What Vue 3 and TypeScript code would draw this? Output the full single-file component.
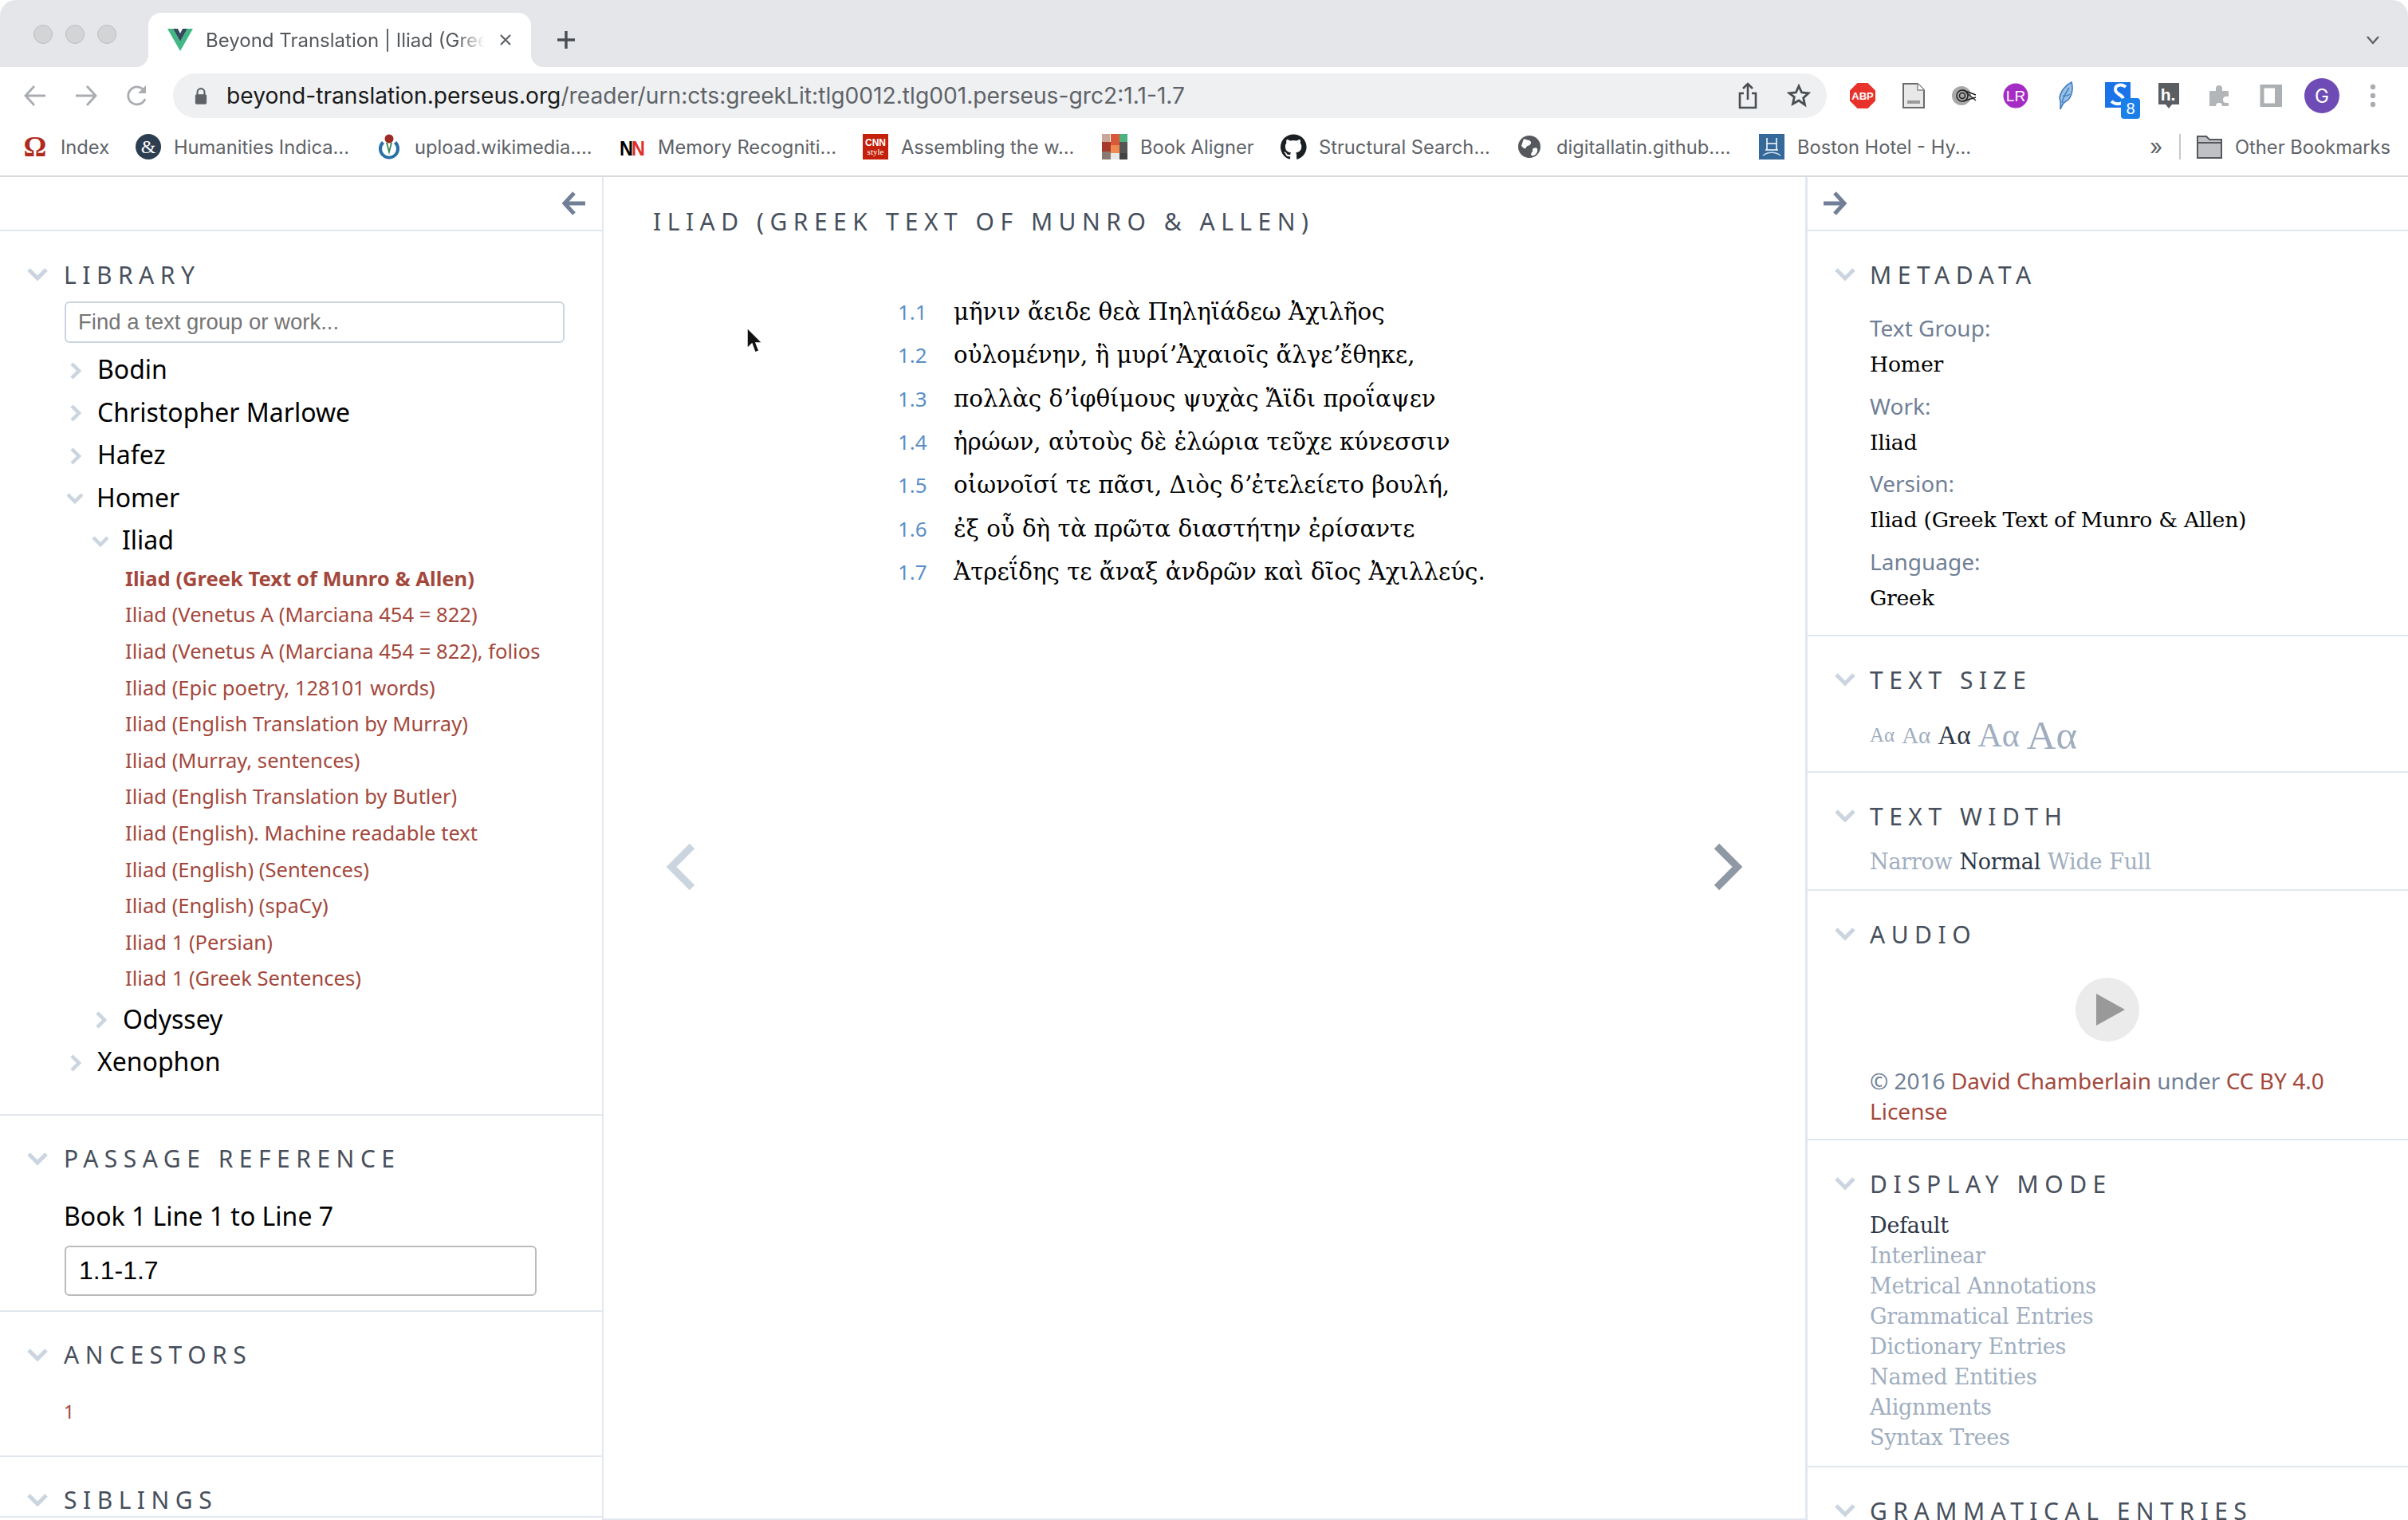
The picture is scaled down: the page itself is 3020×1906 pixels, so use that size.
<template>
  <div class="page">
    <svg class="sprite" aria-hidden="true">
      <symbol id="chev-down" viewBox="0 0 28 18"><path d="M3 3l11 11L25 3" fill="none" stroke="#cbd5e0" stroke-width="5" /></symbol>
      <symbol id="tree-down" viewBox="0 0 22 14"><path d="M2 2l9 9 9-9" fill="none" stroke="#cbd5e0" stroke-width="4.500" /></symbol>
      <symbol id="tree-right" viewBox="0 0 14 22"><path d="M2 2l9 9-9 9" fill="none" stroke="#cbd5e0" stroke-width="4.500" /></symbol>
    </svg>

    <header class="browser">
      <div class="tabstrip">
        <div class="lights"><i /><i /><i /></div>
        <div class="tab">
          <svg class="favicon" viewBox="0 0 32 28">
            <path d="M0 0h7l9 16L25 0h7L16 28z" fill="#41b883" />
            <path d="M7 0h6l3 6 3-6h6l-9 16z" fill="#34495e" />
          </svg>
          <span class="tab-title">Beyond Translation | Iliad (Gree</span>
          <svg class="tab-close" viewBox="0 0 16 16"><path d="M2 2l12 12M14 2L2 14" stroke="#5f6368" stroke-width="2.2" /></svg>
        </div>
        <svg class="tab-plus" viewBox="0 0 24 24"><path d="M12 1v22M1 12h22" stroke="#4a4d51" stroke-width="3.4" /></svg>
        <svg class="tab-caret" viewBox="0 0 18 12"><path d="M2 2l7 8 7-8" fill="none" stroke="#5f6368" stroke-width="2.4" /></svg>
      </div>

      <div class="toolbar">
        <div class="tool">
          <svg width="30" height="28" viewBox="0 0 30 28"><path d="M28 14H3M14 2L3 14l11 12" fill="none" stroke="#a9adb2" stroke-width="2.8" /></svg>
        </div>
        <div class="tool">
          <svg width="30" height="28" viewBox="0 0 30 28"><path d="M2 14h25M16 2l11 12-11 12" fill="none" stroke="#a9adb2" stroke-width="2.8" /></svg>
        </div>
        <div class="tool">
          <svg width="30" height="30" viewBox="0 0 30 30"><path d="M25 19a11 11 0 1 1-1-10" fill="none" stroke="#a9adb2" stroke-width="2.8" /><path d="M26 2v10H16z" fill="#a9adb2" /></svg>
        </div>
        <div class="omnibox">
          <svg class="lock" viewBox="0 0 18 24">
            <path d="M4 11V7a5 5 0 0 1 10 0v4" fill="none" stroke="#5f6368" stroke-width="2.4" />
            <rect x="1" y="10" width="16" height="14" rx="2" fill="#5f6368" />
          </svg>
          <span class="url"><b>beyond-translation.perseus.org</b>/reader/urn:cts:greekLit:tlg0012.tlg001.perseus-grc2:1.1-1.7</span>
          <div class="tool">
            <svg width="24" height="34" viewBox="0 0 24 34"><path d="M7 14H2v18h20V14h-5M12 22V2M6 8l6-6 6 6" fill="none" stroke="#4a4d51" stroke-width="2.6" /></svg>
          </div>
          <div class="tool">
            <svg width="30" height="30" viewBox="0 0 30 30"><path d="M15 3l3.6 8 8.4.9-6.3 5.8 1.8 8.6L15 21l-7.5 4.3 1.8-8.6L3 11.900l8.400-.9z" fill="none" stroke="#4a4d51" stroke-width="2.8" /></svg>
          </div>
        </div>
        <div class="tool ext-first">
          <svg width="32" height="32" viewBox="0 0 32 32">
            <path d="M9.500 0h13L32 9.500v13L22.500 32h-13L0 22.500v-13z" fill="#e8332d" />
            <text x="16" y="21" class="ico-text" font-size="13" font-weight="700" fill="#fff" text-anchor="middle">ABP</text>
          </svg>
        </div>
        <div class="tool">
          <svg width="28" height="32" viewBox="0 0 28 32">
            <path d="M1 1h18l8 8v22H1z" fill="#e8e8e8" stroke="#6a6a6a" stroke-width="2" />
            <path d="M19 1v8h8" fill="#fff" stroke="#8a8a8a" stroke-width="1.500" />
            <rect x="6" y="22" width="16" height="4" fill="#9a9a9a" />
          </svg>
        </div>
        <div class="tool">
          <svg width="32" height="26" viewBox="0 0 32 26">
            <circle cx="12" cy="13" r="12" fill="#a8a8a8" />
            <g fill="none" stroke="#222" stroke-width="1.500"><circle cx="13" cy="13" r="7" /><circle cx="13" cy="13" r="3.500" /><path d="M14 6l16 6M14 20l16-5M18 9l12 10" /></g>
          </svg>
        </div>
        <div class="tool">
          <svg width="32" height="32" viewBox="0 0 32 32">
            <circle cx="16" cy="16" r="15.500" fill="#a42bc4" />
            <text x="16" y="23" class="ico-text" font-size="19" fill="#fff" text-anchor="middle">LR</text>
          </svg>
        </div>
        <div class="tool">
          <svg width="22" height="36" viewBox="0 0 22 36">
            <path d="M17 1C9 5 3 13 2 21c2 4 1 8 1 14 2-5 3-8 7-10 6-3 10-13 7-24z" fill="#9cc0e6" stroke="#3f7fc2" stroke-width="1.600" />
            <path d="M14 8C10 14 7 19 5 27M6 18c3 1 6 0 9-2" fill="none" stroke="#3f7fc2" stroke-width="1.400" />
          </svg>
        </div>
        <div class="tool">
          <svg class="ext-s" width="48" height="46" viewBox="0 0 48 46">
            <rect x="0" y="0" width="32" height="32" fill="#1a73e8" />
            <path d="M26 6c-5-4-13-3-13 3 0 7 10 6 10 13 0 6-9 7-15 2" fill="none" stroke="#fff" stroke-width="4" />
            <rect x="20" y="20" width="24" height="26" rx="4" fill="#1a7fe8" />
            <text x="32" y="40" class="ico-text" font-size="20" fill="#fff" text-anchor="middle">8</text>
          </svg>
        </div>
        <div class="tool">
          <svg width="28" height="32" viewBox="0 0 28 32">
            <path d="M1 0h26v27H18l-4 5-4-5H1z" fill="#5a5e62" />
            <text x="13" y="22" class="ico-text" font-size="21" font-weight="700" fill="#fff" text-anchor="middle">h.</text>
          </svg>
        </div>
        <div class="tool">
          <svg width="30" height="30" viewBox="0 0 30 30">
            <path d="M2 9h8V6a4 4 0 0 1 8 0v3h8v7h-3a4 4 0 0 0 0 8h3v4h-8a4 4 0 0 0-8 0H2z" fill="#b3b6b8" />
          </svg>
        </div>
        <div class="tool">
          <svg width="28" height="28" viewBox="0 0 28 28"><rect x="3" y="2" width="24" height="24" fill="none" stroke="#adb0b2" stroke-width="5" /><rect x="19" y="2" width="8" height="24" fill="#adb0b2" /></svg>
        </div>
        <div class="tool">
          <div class="avatar">G</div>
        </div>
        <div class="tool">
          <svg width="8" height="32" viewBox="0 0 8 32"><circle cx="4" cy="5" r="3.200" fill="#a9adb2" /><circle cx="4" cy="16" r="3.200" fill="#a9adb2" /><circle cx="4" cy="27" r="3.200" fill="#a9adb2" /></svg>
        </div>
      </div>

      <div class="bookmarks">
        <div v-for="b in bookmarks" :key="b.label" class="bookmark">
          <svg class="bm-icon" viewBox="0 0 32 32" v-html="b.icon" />
          <span class="bm-text" :style="{ width: b.width + 'px' }">{{ b.label }}</span>
        </div>
        <span class="bm-more">»</span>
        <i class="bm-sep" />
        <svg class="bm-icon" viewBox="0 0 32 32">
          <path d="M1 30V3h11l4 4h15v23z" fill="#bfc1c4" stroke="#55585c" stroke-width="2" />
          <path d="M1 11h30" stroke="#55585c" stroke-width="2" />
        </svg>
        <span class="bm-other">Other Bookmarks</span>
      </div>
    </header>

    <main class="reader">
      <aside class="sidebar sidebar-left">
        <div class="side-head side-head-left">
          <svg width="32" height="32" viewBox="0 0 32 32"><path d="M30 16H5M16 3L4 16l12 13" fill="none" stroke="#718096" stroke-width="5" /></svg>
        </div>

        <section class="section section-library">
          <h2 class="section-title"><svg class="title-chev"><use href="#chev-down" /></svg>Library</h2>
          <div class="fake-input search-input">Find a text group or work...</div>
          <ul class="tree">
            <li v-for="name in ['Bodin', 'Christopher Marlowe', 'Hafez']" :key="name" class="tree-row">
              <svg class="tree-chev-r"><use href="#tree-right" /></svg>{{ name }}
            </li>
            <li class="tree-row"><svg class="tree-chev-d"><use href="#tree-down" /></svg>Homer</li>
            <li class="tree-row nested"><svg class="tree-chev-d"><use href="#tree-down" /></svg>Iliad</li>
            <li v-for="(v, i) in versions" :key="v" class="version" :class="{ current: i === 0 }">{{ v }}</li>
            <li class="tree-row nested"><svg class="tree-chev-r"><use href="#tree-right" /></svg>Odyssey</li>
            <li class="tree-row"><svg class="tree-chev-r"><use href="#tree-right" /></svg>Xenophon</li>
          </ul>
        </section>

        <section class="section section-passage">
          <h2 class="section-title"><svg class="title-chev"><use href="#chev-down" /></svg>Passage Reference</h2>
          <div class="passage-label">Book 1 Line 1 to Line 7</div>
          <div class="fake-input passage-input">1.1-1.7</div>
        </section>

        <section class="section section-ancestors">
          <h2 class="section-title"><svg class="title-chev"><use href="#chev-down" /></svg>Ancestors</h2>
          <div class="ancestor">1</div>
        </section>

        <section class="section">
          <h2 class="section-title"><svg class="title-chev"><use href="#chev-down" /></svg>Siblings</h2>
        </section>
      </aside>

      <div class="center">
        <h1 class="work-title">Iliad (Greek Text of Munro &amp; Allen)</h1>
        <div class="center-body">
          <svg class="pager" width="42" height="60" viewBox="0 0 42 60"><path d="M36 4L10 30l26 26" fill="none" stroke="#cbd5e0" stroke-width="9" /></svg>
          <ol class="lines">
            <li v-for="l in lines" :key="l.ref" class="line">
              <span class="line-ref">{{ l.ref }}</span>
              <span class="line-text">{{ l.text }}</span>
            </li>
          </ol>
          <svg class="pager" width="42" height="60" viewBox="0 0 42 60"><path d="M6 4l26 26L6 56" fill="none" stroke="#8f99a6" stroke-width="9" /></svg>
        </div>
        <svg class="cursor" width="24" height="36" viewBox="0 0 24 36">
          <path d="M2 1v26l6-6 4 11 5-2-4-10h8z" fill="#111" stroke="#fff" stroke-width="1.500" />
        </svg>
      </div>

      <aside class="sidebar sidebar-right">
        <div class="side-head">
          <svg width="32" height="32" viewBox="0 0 32 32"><path d="M2 16h25M16 3l12 13-12 13" fill="none" stroke="#718096" stroke-width="5" /></svg>
        </div>

        <section class="section section-meta">
          <h2 class="section-title"><svg class="title-chev"><use href="#chev-down" /></svg>Metadata</h2>
          <dl class="meta">
            <template v-for="m in metadata" :key="m.label">
              <dt>{{ m.label }}:</dt>
              <dd>{{ m.value }}</dd>
            </template>
          </dl>
        </section>

        <section class="section section-size">
          <h2 class="section-title"><svg class="title-chev"><use href="#chev-down" /></svg>Text Size</h2>
          <div class="sizes">
            <span v-for="(s, i) in textSizes" :key="s" :class="{ active: i === 2 }" :style="{ fontSize: s + 'px' }">Aα</span>
          </div>
        </section>

        <section class="section section-width">
          <h2 class="section-title"><svg class="title-chev"><use href="#chev-down" /></svg>Text Width</h2>
          <div class="widths">
            <span>Narrow</span>
            <span class="active">Normal</span>
            <span>Wide</span>
            <span>Full</span>
          </div>
        </section>

        <section class="section section-audio">
          <h2 class="section-title"><svg class="title-chev"><use href="#chev-down" /></svg>Audio</h2>
          <div class="play">
            <svg width="36" height="40" viewBox="0 0 36 40"><path d="M0 0l36 20L0 40z" fill="#999" /></svg>
          </div>
          <p class="credit">© 2016 <a>David Chamberlain</a> under <a>CC BY 4.0 License</a></p>
        </section>

        <section class="section section-display">
          <h2 class="section-title"><svg class="title-chev"><use href="#chev-down" /></svg>Display Mode</h2>
          <ul class="modes">
            <li v-for="(m, i) in modes" :key="m" :class="{ active: i === 0 }">{{ m }}</li>
          </ul>
        </section>

        <section class="section">
          <h2 class="section-title"><svg class="title-chev"><use href="#chev-down" /></svg>Grammatical Entries</h2>
        </section>
      </aside>
    </main>
  </div>
</template>

<script setup lang="ts">
interface IBookmark {
  label: string;
  width: number;
  icon: string;
}

const bookmarks: IBookmark[] = [
  {
    label: 'Index',
    width: 94,
    icon: '<text x="16" y="28" font-family="Liberation Serif" font-size="36" font-weight="700" fill="#b02a20" text-anchor="middle">Ω</text>',
  },
  {
    label: 'Humanities Indica...',
    width: 254,
    icon: '<circle cx="16" cy="16" r="16" fill="#2c3e50"/><text x="16" y="24" font-family="Liberation Serif" font-size="24" fill="#fff" text-anchor="middle">&amp;</text>',
  },
  {
    label: 'upload.wikimedia....',
    width: 257,
    icon: '<path d="M7 9a13 13 0 1 0 18 0l-3 3a9 9 0 1 1-12 0z" fill="#2a6fa8"/><circle cx="16" cy="6" r="5.500" fill="#9c2a25"/><path d="M12 11l4 15 4-15-2 0-2 8-2-8z" fill="#3a8a5c"/>',
  },
  {
    label: 'Memory Recogniti...',
    width: 257,
    icon: '<text x="0" y="27" font-family="Liberation Sans" font-size="25" font-weight="700" fill="#000" textLength="17" lengthAdjust="spacingAndGlyphs">N</text><text x="15" y="27" font-family="Liberation Sans" font-size="25" font-weight="700" fill="#e0302a" textLength="17" lengthAdjust="spacingAndGlyphs">N</text>',
  },
  {
    label: 'Assembling the w...',
    width: 252,
    icon: '<rect width="32" height="32" fill="#c4200c"/><text x="16" y="15" font-family="Liberation Sans" font-size="12" font-weight="700" fill="#fff" text-anchor="middle">CNN</text><text x="16" y="26" font-family="Liberation Serif" font-size="11" fill="#fff" text-anchor="middle">style</text>',
  },
  {
    label: 'Book Aligner',
    width: 176,
    icon: '<rect width="10" height="10" fill="#c9a89a"/><rect x="11" width="11" height="14" fill="#d9583a"/><rect x="22" width="10" height="10" fill="#4fb080"/><rect y="10" width="11" height="12" fill="#a8382a"/><rect x="11" y="14" width="11" height="10" fill="#ef8a50"/><rect x="22" y="10" width="10" height="14" fill="#555"/><rect y="22" width="11" height="10" fill="#8a7a70"/><rect x="11" y="24" width="11" height="8" fill="#e8e8e8"/><rect x="22" y="24" width="10" height="8" fill="#444"/>',
  },
  {
    label: 'Structural Search...',
    width: 250,
    icon: '<path fill="#1b1f23" d="M16 .4A16 16 0 0 0 11 31.600c.8.100 1.100-.3 1.100-.8v-2.800c-4.500 1-5.400-2.100-5.400-2.100-.7-1.800-1.800-2.300-1.800-2.300-1.400-1 .1-1 .1-1 1.600.1 2.500 1.700 2.500 1.700 1.400 2.500 3.800 1.800 4.700 1.400.1-1.100.6-1.800 1-2.200-3.600-.4-7.300-1.800-7.300-7.900 0-1.800.6-3.200 1.600-4.300-.2-.4-.7-2 .2-4.300 0 0 1.300-.4 4.400 1.600a15 15 0 0 1 8 0c3-2 4.400-1.600 4.400-1.600.9 2.300.3 3.900.2 4.300 1 1.100 1.600 2.500 1.600 4.300 0 6.100-3.700 7.500-7.300 7.900.6.500 1.100 1.500 1.100 3v4.400c0 .4.300.9 1.100.8A16 16 0 0 0 16 .4z"/>',
  },
  {
    label: 'digitallatin.github....',
    width: 254,
    icon: '<circle cx="14" cy="16" r="14" fill="#55585c"/><path d="M7 6c4 2 9 1 9 5s-5 3-6 6-4 0-6-2zM19 18c4-2 6 0 5 4s-5 6-7 5 0-4 1-5-1-3 1-4z" fill="#fff"/>',
  },
  {
    label: 'Boston Hotel - Hy...',
    width: 434,
    icon: '<rect width="32" height="32" fill="#34699a"/><path d="M10 5v15M22 5v15M10 12h12M8 20h16" stroke="#fff" stroke-width="1.500" fill="none"/><path d="M5 27c6-5 16-5 22 0" stroke="#cfe0ee" stroke-width="1.500" fill="none"/>',
  },
];

const versions: string[] = [
  'Iliad (Greek Text of Munro & Allen)',
  'Iliad (Venetus A (Marciana 454 = 822)',
  'Iliad (Venetus A (Marciana 454 = 822), folios',
  'Iliad (Epic poetry, 128101 words)',
  'Iliad (English Translation by Murray)',
  'Iliad (Murray, sentences)',
  'Iliad (English Translation by Butler)',
  'Iliad (English). Machine readable text',
  'Iliad (English) (Sentences)',
  'Iliad (English) (spaCy)',
  'Iliad 1 (Persian)',
  'Iliad 1 (Greek Sentences)',
];

const lines = [
  { ref: '1.1', text: 'μῆνιν ἄειδε θεὰ Πηληϊάδεω Ἀχιλῆος' },
  { ref: '1.2', text: 'οὐλομένην, ἣ μυρίʼἈχαιοῖς ἄλγεʼἔθηκε,' },
  { ref: '1.3', text: 'πολλὰς δʼἰφθίμους ψυχὰς Ἄϊδι προΐαψεν' },
  { ref: '1.4', text: 'ἡρώων, αὐτοὺς δὲ ἑλώρια τεῦχε κύνεσσιν' },
  { ref: '1.5', text: 'οἰωνοῖσί τε πᾶσι, Διὸς δʼἐτελείετο βουλή,' },
  { ref: '1.6', text: 'ἐξ οὗ δὴ τὰ πρῶτα διαστήτην ἐρίσαντε' },
  { ref: '1.7', text: 'Ἀτρεΐδης τε ἄναξ ἀνδρῶν καὶ δῖος Ἀχιλλεύς.' },
];

const metadata = [
  { label: 'Text Group', value: 'Homer' },
  { label: 'Work', value: 'Iliad' },
  { label: 'Version', value: 'Iliad (Greek Text of Munro & Allen)' },
  { label: 'Language', value: 'Greek' },
];

const textSizes = [25, 29, 33, 42, 51];

const modes: string[] = [
  'Default',
  'Interlinear',
  'Metrical Annotations',
  'Grammatical Entries',
  'Dictionary Entries',
  'Named Entities',
  'Alignments',
  'Syntax Trees',
];
</script>

<style>
html,
body {
  margin: 0;
  background: #fff;
  overflow: hidden;
}
</style>

<style scoped>
.page {
  width: 3020px;
  height: 1906px;
  overflow: hidden;
  display: flex;
  flex-direction: column;
  position: relative;
  font-family: "Noto Sans", sans-serif;
  color: #000;
  background: #fff;
}

.sprite {
  position: absolute;
  width: 0;
  height: 0;
}

.ico-text {
  font-family: "Liberation Sans", sans-serif;
}

/* browser chrome */
.browser {
  font-family: Inter, sans-serif;
  flex: none;
}

.tabstrip {
  height: 84px;
  background: #e4e6e9;
  border-radius: 20px 20px 0 0;
  display: flex;
  align-items: flex-end;
  position: relative;
}

.lights {
  display: flex;
  gap: 16px;
  margin: 0 40px 29px 42px;
}

.lights i {
  width: 24px;
  height: 24px;
  border-radius: 50%;
  background: #d3d4d6;
  border: 1px solid #bcbdbf;
  box-sizing: border-box;
}

.tab {
  width: 480px;
  height: 68px;
  background: #fff;
  border-radius: 16px 16px 0 0;
  display: flex;
  align-items: center;
  padding: 0 24px;
  box-sizing: border-box;
  position: relative;
}

.tab::before,
.tab::after {
  content: "";
  position: absolute;
  bottom: 0;
  width: 16px;
  height: 16px;
}

.tab::before {
  left: -16px;
  background: radial-gradient(circle at 0 0, transparent 16px, #fff 16.5px);
}

.tab::after {
  right: -16px;
  background: radial-gradient(circle at 100% 0, transparent 16px, #fff 16.5px);
}

.favicon {
  width: 32px;
  height: 28px;
  flex: none;
  margin-right: 16px;
}

.tab-title {
  width: 350px;
  flex: none;
  font-size: 24px;
  color: #55585c;
  white-space: nowrap;
  -webkit-mask-image: linear-gradient(90deg, #000 90%, transparent 100%);
  mask-image: linear-gradient(90deg, #000 90%, transparent 100%);
}

.tab-close {
  width: 16px;
  height: 16px;
  flex: none;
  margin-left: 18px;
}

.tab-plus {
  width: 24px;
  height: 24px;
  margin: 0 0 22px 32px;
}

.tab-caret {
  width: 18px;
  height: 12px;
  margin: 0 35px 28px auto;
}

.toolbar {
  height: 76px;
  display: flex;
  align-items: center;
  padding: 0 12px 4px;
  box-sizing: border-box;
}

.tool {
  width: 64px;
  height: 56px;
  flex: none;
  display: flex;
  align-items: center;
  justify-content: center;
  position: relative;
}

.ext-first {
  margin-left: 13px;
}

.ext-s {
  margin: 12px 0 0 16px;
  flex: none;
}

.avatar {
  width: 44px;
  height: 44px;
  border-radius: 50%;
  background: #6f4cb5;
  color: #fff;
  font-size: 24px;
  display: flex;
  align-items: center;
  justify-content: center;
}

.omnibox {
  flex: 1;
  height: 56px;
  margin-left: 13px;
  padding: 0 3px 0 27px;
  background: #eef0f2;
  border-radius: 28px;
  display: flex;
  align-items: center;
}

.lock {
  width: 16px;
  height: 22px;
  margin-right: 24px;
  flex: none;
}

.url {
  flex: 1;
  font-size: 28.200px;
  color: #5f6368;
  white-space: nowrap;
}

.url b {
  font-weight: 400;
  color: #1a1a1a;
}

.bookmarks {
  height: 62px;
  box-sizing: border-box;
  padding: 8px 0 20px 28px;
  border-bottom: 2px solid #dadada;
  display: flex;
  align-items: center;
}

.bookmark {
  display: flex;
  align-items: center;
  flex: none;
}

.bm-icon {
  width: 32px;
  height: 32px;
  flex: none;
  margin-right: 16px;
  overflow: visible;
}

.bm-text {
  flex: none;
  font-size: 23.700px;
  color: #5f6368;
  white-space: nowrap;
}

.bm-more {
  width: 24px;
  padding-left: 8px;
  font-size: 28px;
  color: #5f6368;
}

.bm-sep {
  width: 2px;
  height: 32px;
  background: #c8c8c8;
  margin: 0 20px 0 13px;
}

.bm-other {
  font-size: 23.700px;
  color: #5f6368;
  white-space: nowrap;
}

/* reader layout */
.reader {
  flex: 1;
  min-height: 0;
  display: flex;
}

.sidebar {
  flex: none;
  overflow: hidden;
}

.sidebar-left {
  width: 755px;
}

.sidebar-right {
  flex: 1;
  width: 0;
}

.side-head {
  height: 66px;
  padding: 0 18px;
  border-bottom: 2px solid #e2e8f0;
  display: flex;
  align-items: center;
}

.side-head-left {
  justify-content: flex-end;
  padding-right: 19px;
}

.section {
  padding: 34px 0 0 33px;
  border-bottom: 2px solid #e2e8f0;
}

.sidebar-right .section {
  padding-right: 80px;
}

.section-title {
  margin: 0;
  display: flex;
  align-items: center;
  height: 40px;
  font-size: 30px;
  font-weight: 400;
  letter-spacing: 7.500px;
  text-transform: uppercase;
  color: #474f5c;
  white-space: nowrap;
}

.title-chev {
  width: 28px;
  height: 18px;
  flex: none;
  margin-right: 19px;
}

.sidebar-right .title-chev {
  margin-right: 17px;
}

/* library */
.section-library {
  padding-bottom: 39px;
}

.fake-input {
  box-sizing: border-box;
  border-radius: 6px;
  display: flex;
  align-items: center;
  font-family: "Liberation Sans", sans-serif;
}

.search-input {
  margin: 14px 0 0 48px;
  width: 627px;
  height: 52px;
  padding-left: 15px;
  border: 2px solid #cbd5e0;
  font-size: 27.500px;
  color: #757575;
}

.tree {
  list-style: none;
  margin: 6px 0 0;
  padding: 0 0 0 47px;
}

.tree-row {
  height: 53.500px;
  display: flex;
  align-items: center;
  font-size: 32px;
}

.tree-chev-r {
  width: 14px;
  height: 22px;
  flex: none;
  margin: 4px 20px 0 8px;
}

.tree-chev-d {
  width: 22px;
  height: 14px;
  flex: none;
  margin: 4px 16px 0 3px;
}

.nested {
  padding-left: 32px;
}

.version {
  height: 45.600px;
  margin-left: 77px;
  display: flex;
  align-items: center;
  font-size: 25.600px;
  color: #a4483c;
  white-space: nowrap;
}

.version.current {
  margin-top: -1px;
  font-weight: 700;
}

.version + .nested {
  margin-top: 1px;
}

/* passage */
.section-passage {
  padding-bottom: 18px;
}

.passage-label {
  margin: 30px 0 0 47px;
  font-size: 32px;
  line-height: 44px;
}

.passage-input {
  margin: 15px 0 0 48px;
  width: 592px;
  height: 63px;
  padding-left: 16px;
  border: 2px solid #bbb;
  font-size: 32px;
}

.section-ancestors {
  padding-bottom: 35px;
}

.ancestor {
  margin: 31px 0 0 47px;
  font-size: 23px;
  line-height: 40px;
  color: #a4483c;
}

/* center */
.center {
  width: 1512px;
  flex: none;
  box-sizing: border-box;
  border-left: 2px solid #e2e8f0;
  border-right: 3px solid #e2e8f0;
  border-bottom: 2px solid #e2e8f0;
  position: relative;
}

.work-title {
  margin: 0;
  padding: 36px 0 0 62px;
  height: 40px;
  box-sizing: content-box;
  font-size: 30px;
  line-height: 40px;
  font-weight: 400;
  letter-spacing: 7.500px;
  text-transform: uppercase;
  color: #474f5c;
  white-space: nowrap;
}

.center-body {
  height: 1578px;
  padding: 0 75px;
  box-sizing: border-box;
  display: flex;
}

.pager {
  flex: none;
  align-self: center;
}

.lines {
  flex: 1;
  list-style: none;
  margin: 66px 0 0 252px;
  padding: 0;
}

.line {
  height: 54.300px;
  display: flex;
  align-items: center;
}

.line-ref {
  width: 70px;
  flex: none;
  font-size: 26px;
  color: #5b8fc7;
}

.line-text {
  font-family: "DejaVu Serif", serif;
  font-size: 29.300px;
  white-space: nowrap;
}

.cursor {
  position: absolute;
  left: 178px;
  top: 188px;
}

/* right */
.section-meta {
  padding-bottom: 17px;
}

.meta {
  margin: 25px 0 0 45px;
}

.meta dt {
  font-size: 28px;
  line-height: 45px;
  color: #718096;
}

.meta dd {
  margin: 0 0 7.500px;
  font-family: "DejaVu Serif", serif;
  font-size: 26.700px;
  letter-spacing: -0.250px;
  line-height: 45px;
}

.section-size {
  padding-bottom: 15px;
}

.sizes {
  margin: 24px 0 0 45px;
  height: 56px;
  display: flex;
  align-items: flex-end;
  gap: 9px;
  font-family: "Liberation Serif", serif;
  line-height: 60px;
  color: #a0aec0;
}

.sizes .active {
  color: #2d3748;
}

.section-width {
  padding-bottom: 14px;
}

.widths {
  margin: 18px 0 0 45px;
  display: flex;
  gap: 9px;
  font-family: "DejaVu Serif", serif;
  font-size: 27px;
  letter-spacing: -0.250px;
  line-height: 40px;
  color: #a0aec0;
}

.widths .active {
  color: #2d3748;
}

.section-audio {
  padding-bottom: 16px;
}

.play {
  margin: 35px auto 0 303px;
  width: 80px;
  height: 80px;
  border-radius: 50%;
  background: #ebebeb;
  display: flex;
  align-items: center;
  justify-content: center;
}

.play svg {
  margin-left: 8px;
}

.credit {
  margin: 30px 0 0 45px;
  font-size: 28px;
  line-height: 38px;
  color: #718096;
}

.credit a {
  color: #a4483c;
}

.section-display {
  padding-bottom: 16px;
}

.modes {
  list-style: none;
  margin: 14px 0 0 45px;
  padding: 0;
  font-family: "DejaVu Serif", serif;
  font-size: 27px;
  letter-spacing: -0.250px;
  line-height: 38px;
  color: #a0aec0;
}

.modes .active {
  color: #2d3748;
}
</style>
